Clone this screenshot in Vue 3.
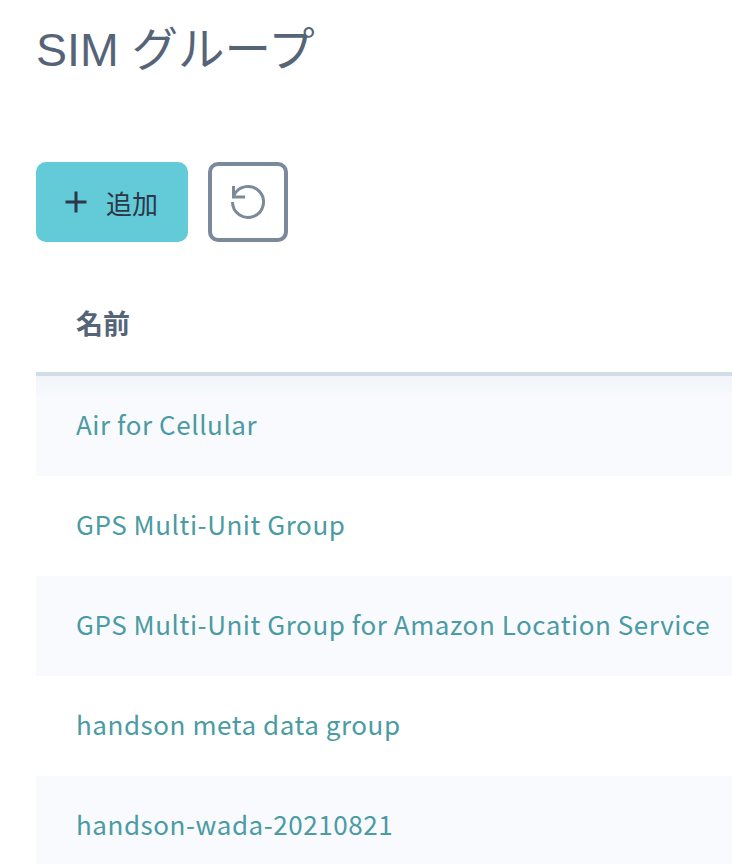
<template>
  <div class="page">
    <h1 class="title">SIM グループ</h1>

    <div class="actions">
      <button class="add-btn">
        <svg class="plus" width="24" height="24" viewBox="0 0 24 24">
          <path d="M12 1.5v21M1.5 12h21" fill="none" stroke="#2d3748" stroke-width="3" />
        </svg>
        <span>追加</span>
      </button>
      <button class="reload-btn" aria-label="reload">
        <svg width="40" height="40" viewBox="0 0 40 40" fill="none" stroke="#7a899c" stroke-width="3">
          <path d="M6 13.3A15.5 15.5 0 1 1 4.5 20" />
          <path d="M5.5 4v11h11.5" />
        </svg>
      </button>
    </div>

    <table class="groups">
      <thead>
        <tr><th>名前</th></tr>
      </thead>
      <tbody>
        <tr v-for="name in groups" :key="name">
          <td><a href="#">{{ name }}</a></td>
        </tr>
      </tbody>
    </table>
  </div>
</template>

<script setup>
const groups = [
  'Air for Cellular',
  'GPS Multi-Unit Group',
  'GPS Multi-Unit Group for Amazon Location Service',
  'handson meta data group',
  'handson-wada-20210821'
];
</script>

<style>
html,
body {
  margin: 0;
  background: #fff;
  overflow: hidden;
}
</style>

<style scoped>
.page {
  height: 864px;
  overflow: hidden;
  padding-left: 36px;
  font-family: "Noto Sans CJK JP", "Liberation Sans", sans-serif;
}

.title {
  margin: 0;
  padding-top: 20px;
  height: 162px;
  box-sizing: border-box;
  font-family: "Liberation Sans", "Noto Sans CJK JP", sans-serif;
  font-size: 46.5px;
  font-weight: 400;
  line-height: 60px;
  color: #566478;
}

.actions {
  display: flex;
  gap: 20px;
}

.add-btn {
  display: flex;
  align-items: center;
  gap: 18px;
  width: 152px;
  height: 80px;
  padding: 0 0 0 28px;
  border: none;
  border-radius: 10px;
  background: #63cad8;
  color: #2d3748;
  font-family: inherit;
  font-size: 26px;
}

.reload-btn {
  display: flex;
  align-items: center;
  justify-content: center;
  width: 80px;
  height: 80px;
  padding: 0;
  border: 4px solid #7a899c;
  border-radius: 10px;
  background: #fff;
}

.groups {
  width: 100%;
  margin-top: 30px;
  border-collapse: collapse;
}

.groups th {
  height: 100px;
  padding: 0 0 0 40px;
  border-bottom: 4px solid #d3dde8;
  text-align: left;
  font-size: 27px;
  font-weight: 700;
  color: #566478;
}

.groups td {
  height: 94px;
  padding: 0 0 6px 40px;
  font-size: 26px;
  letter-spacing: 0.55px;
  white-space: nowrap;
}

.groups tbody tr:nth-child(odd) {
  background: #f8fafd;
}

.groups tbody tr:first-child {
  background: linear-gradient(#f0f4f8, #f8fafd 24px);
}

.groups a {
  color: #4a9ba3;
  text-decoration: none;
}
</style>
